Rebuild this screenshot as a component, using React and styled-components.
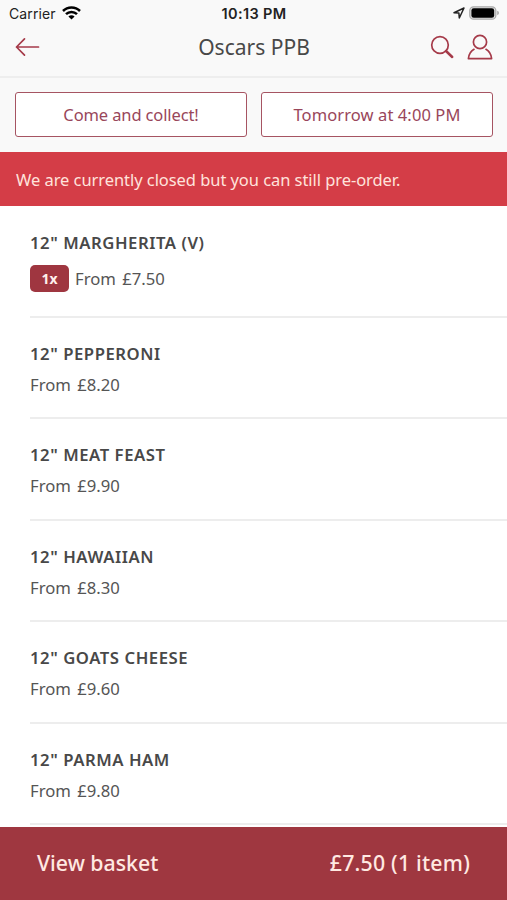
import styled, { createGlobalStyle } from "styled-components";

const items = [
  { name: '12" MARGHERITA (V)', price: "£7.50", qty: 1 },
  { name: '12" PEPPERONI', price: "£8.20" },
  { name: '12" MEAT FEAST', price: "£9.90" },
  { name: '12" HAWAIIAN', price: "£8.30" },
  { name: '12" GOATS CHEESE', price: "£9.60" },
  { name: '12" PARMA HAM', price: "£9.80" },
];

const App = () => {
  return (
    <Wrapper>
      <GlobalStyle />
      <StatusBar>
        <StatusSide>
          Carrier
          <svg width="19" height="14" viewBox="0 0 19 14">
            <g fill="none" stroke="#000" strokeWidth="2.5">
              <path d="M1 5C5.7 0.3 13.3 0.3 18 5" />
              <path d="M4 8.2C7 5.2 12 5.2 15 8.2" />
            </g>
            <path d="M6.4 10.5C8.2 8.9 10.8 8.9 12.6 10.5L9.5 13.5Z" />
          </svg>
        </StatusSide>
        <Time>10:13 PM</Time>
        <StatusSide $right>
          <svg width="12" height="12" viewBox="0 0 12 12">
            <path
              d="M1 5.7L11 1L6.3 11L5.9 6.1Z"
              fill="none"
              stroke="#222"
              strokeWidth="1.5"
              strokeLinejoin="round"
            />
          </svg>
          <svg width="30" height="14" viewBox="0 0 30 14">
            <rect x="0.8" y="0.8" width="26" height="12.4" rx="3.8" fill="#e4e4e4" stroke="#aaa" strokeWidth="1.3" />
            <rect x="2.4" y="2.3" width="22.8" height="9.4" rx="2.3" />
            <path d="M28.2 4.8Q30 5.4 30 7T28.2 9.2Z" fill="#aaa" />
          </svg>
        </StatusSide>
      </StatusBar>

      <Header>
        <BackIcon viewBox="0 0 25 20">
          <path d="M9.5 1.8L1.5 10L9.5 18.2M1.5 10H23.5" />
        </BackIcon>
        <Title>Oscars PPB</Title>
        <Actions>
          <SearchIcon viewBox="0 0 24 24">
            <circle cx="10" cy="10" r="8.3" />
            <path d="M16 16L22.2 22" strokeWidth="2.5" />
          </SearchIcon>
          <UserIcon viewBox="0 0 26 26">
            <circle cx="13" cy="8" r="6.6" />
            <path d="M7 15.3C3.9 17 1.9 20 1.4 24.6H24.6C24.1 20 22.1 17 19 15.3" />
          </UserIcon>
        </Actions>
      </Header>

      <Options>
        <Option $spacing="-0.12px">Come and collect!</Option>
        <Option $spacing="0.1px">Tomorrow at 4:00 PM</Option>
      </Options>

      <Notice>We are currently closed but you can still pre-order.</Notice>

      <Menu>
        {items.map((item) => (
          <Item key={item.name} $tall={item.qty}>
            <ItemName>{item.name}</ItemName>
            <PriceRow $tall={item.qty}>
              {item.qty && <Qty>{item.qty}x</Qty>}
              <Price>From {item.price}</Price>
            </PriceRow>
          </Item>
        ))}
      </Menu>

      <Basket>
        <span>View basket</span>
        <Total>£7.50 (1 item)</Total>
      </Basket>
    </Wrapper>
  );
};

const GlobalStyle = createGlobalStyle`
  * {
    box-sizing: border-box;
  }

  body {
    margin: 0;
    background: #fff;
  }
`;

const Wrapper = styled.div`
  display: flex;
  flex-direction: column;
  height: 900px;
  overflow: hidden;
  font-family: "Noto Sans", sans-serif;
  color: #484848;
`;

const StatusBar = styled.div`
  display: grid;
  grid-template-columns: 1fr auto 1fr;
  align-items: center;
  flex: none;
  height: 26px;
  padding: 0 8px 0 9px;
  background: #f9f9f9;
  color: #222;
  font-family: Inter, sans-serif;
  font-size: 14px;
`;

const StatusSide = styled.div`
  display: flex;
  align-items: center;
  justify-content: ${(props) => (props.$right ? "flex-end" : "flex-start")};
  gap: ${(props) => (props.$right ? "4px" : "6px")};
  letter-spacing: 0.1px;
`;

const Time = styled.span`
  font-size: 14.5px;
  font-weight: 600;
  letter-spacing: 0.35px;
`;

const Header = styled.header`
  display: grid;
  grid-template-columns: 1fr auto 1fr;
  align-items: center;
  flex: none;
  height: 52px;
  padding: 0 14px 9px 15px;
  background: #f9f9f9;
  border-bottom: 2px solid #eeeeee;
`;

const Icon = styled.svg`
  fill: none;
  stroke: #a53a49;
  stroke-width: 1.7;
  stroke-linecap: round;
  stroke-linejoin: round;
`;

const BackIcon = styled(Icon)`
  width: 25px;
  height: 20px;
`;

const SearchIcon = styled(Icon)`
  width: 24px;
  height: 24px;
`;

const UserIcon = styled(Icon)`
  width: 26px;
  height: 26px;
`;

const Title = styled.h1`
  margin: 0;
  font-size: 21px;
  font-weight: 400;
  line-height: 28px;
`;

const Actions = styled.div`
  display: flex;
  align-items: center;
  justify-content: flex-end;
  gap: 13px;
`;

const Options = styled.div`
  display: grid;
  grid-template-columns: 1fr 1fr;
  gap: 14px;
  flex: none;
  height: 74px;
  padding: 14px 14px 15px 15px;
  background: #f9f9f9;
`;

const Option = styled.button`
  padding: 0;
  background: #fff;
  border: 1.5px solid #a65462;
  border-radius: 3px;
  color: #99465a;
  font-family: inherit;
  font-size: 16.5px;
  letter-spacing: ${(props) => props.$spacing};
`;

const Notice = styled.div`
  display: flex;
  align-items: center;
  flex: none;
  height: 54px;
  padding-left: 16px;
  background: #d43d47;
  color: #ffe3dc;
  font-size: 16.5px;
  letter-spacing: -0.06px;
  white-space: nowrap;
`;

const Menu = styled.main`
  flex: 1;
  min-height: 0;
  overflow: hidden;
`;

const Item = styled.section`
  height: ${(props) => (props.$tall ? "112px" : "101.4px")};
  margin-left: 30px;
  padding-top: ${(props) => (props.$tall ? "25px" : "24px")};
  border-bottom: 2px solid #ededed;
`;

const ItemName = styled.h2`
  margin: 0;
  font-size: 16.7px;
  font-weight: 600;
  line-height: 24px;
  letter-spacing: 0.55px;
`;

const PriceRow = styled.div`
  display: flex;
  align-items: center;
  gap: 6px;
  height: ${(props) => (props.$tall ? "27px" : "24px")};
  margin-top: ${(props) => (props.$tall ? "10px" : "6.6px")};
`;

const Qty = styled.span`
  width: 39px;
  background: #9f3640;
  border-radius: 5px;
  color: #fff0ec;
  font-size: 14px;
  font-weight: 700;
  line-height: 27px;
  text-align: center;
`;

const Price = styled.span`
  font-size: 16.7px;
  word-spacing: 2px;
  color: #555;
`;

const Basket = styled.footer`
  display: flex;
  align-items: center;
  justify-content: space-between;
  flex: none;
  height: 73px;
  padding: 0 37px 2px;
  background: #9f3740;
  color: #ffe9e2;
  font-size: 21.3px;
  font-weight: 500;
`;

const Total = styled.span`
  letter-spacing: 0.2px;
`;

export default App;
